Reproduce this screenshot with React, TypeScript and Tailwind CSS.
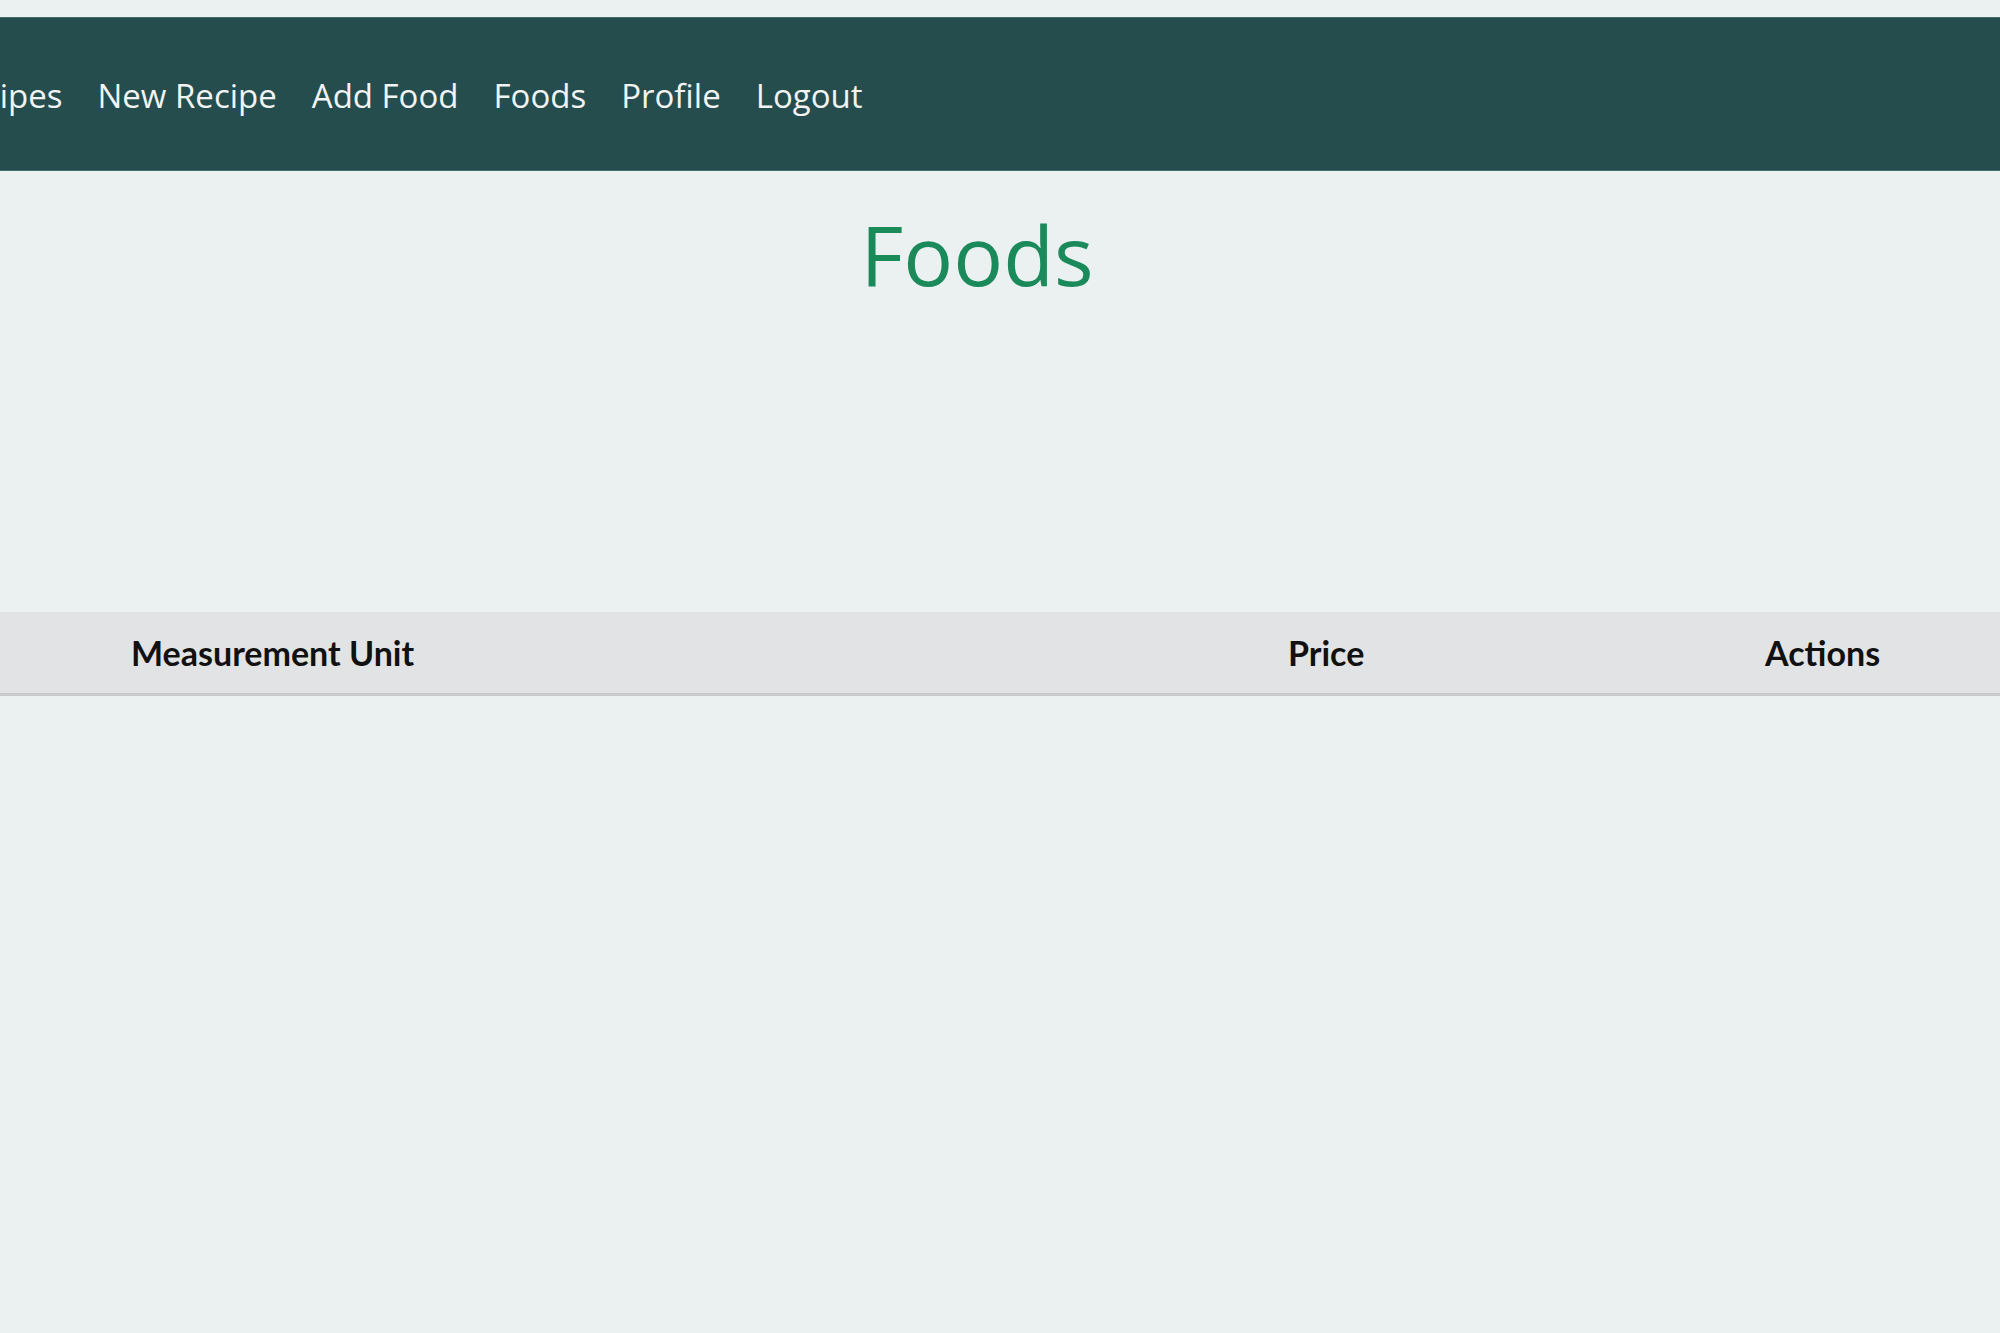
import { ReactNode } from "react";

const navLinks = ["Recipes", "New Recipe", "Add Food", "Foods", "Profile", "Logout"];

const HeaderCell = ({ children }: { children: ReactNode }) => (
  <div className="text-[34px] font-bold text-[#111]">{children}</div>
);

const App = () => {
  return (
    <div className="min-h-[1333px] w-[2000px] overflow-hidden bg-[#ebf1f0] font-['Open_Sans',sans-serif]">
      <div className="h-[17px]" />
      <nav className="flex h-[154px] items-center border-y border-[#3f6e6c] bg-[#254d4d]">
        <ul className="-ml-[55px] flex items-center gap-[35px] pt-[4px]">
          {navLinks.map((link) => (
            <li key={link} className="text-[33px] text-[#f1f4f3]">
              {link}
            </li>
          ))}
        </ul>
      </nav>

      <h1 className="mt-[41px] pr-[46px] text-center text-[83px] leading-none text-[#1b8a5a]">
        Foods
      </h1>

      <div className="mt-[317px] grid h-[84px] grid-cols-[1157px_477px_1fr] items-center border-b-[3px] border-[#c9cacb] bg-[#e2e3e4] pl-[131px] font-['Lato',sans-serif]">
        <HeaderCell>Measurement Unit</HeaderCell>
        <HeaderCell>Price</HeaderCell>
        <HeaderCell>Actions</HeaderCell>
      </div>
    </div>
  );
};

export default App;
